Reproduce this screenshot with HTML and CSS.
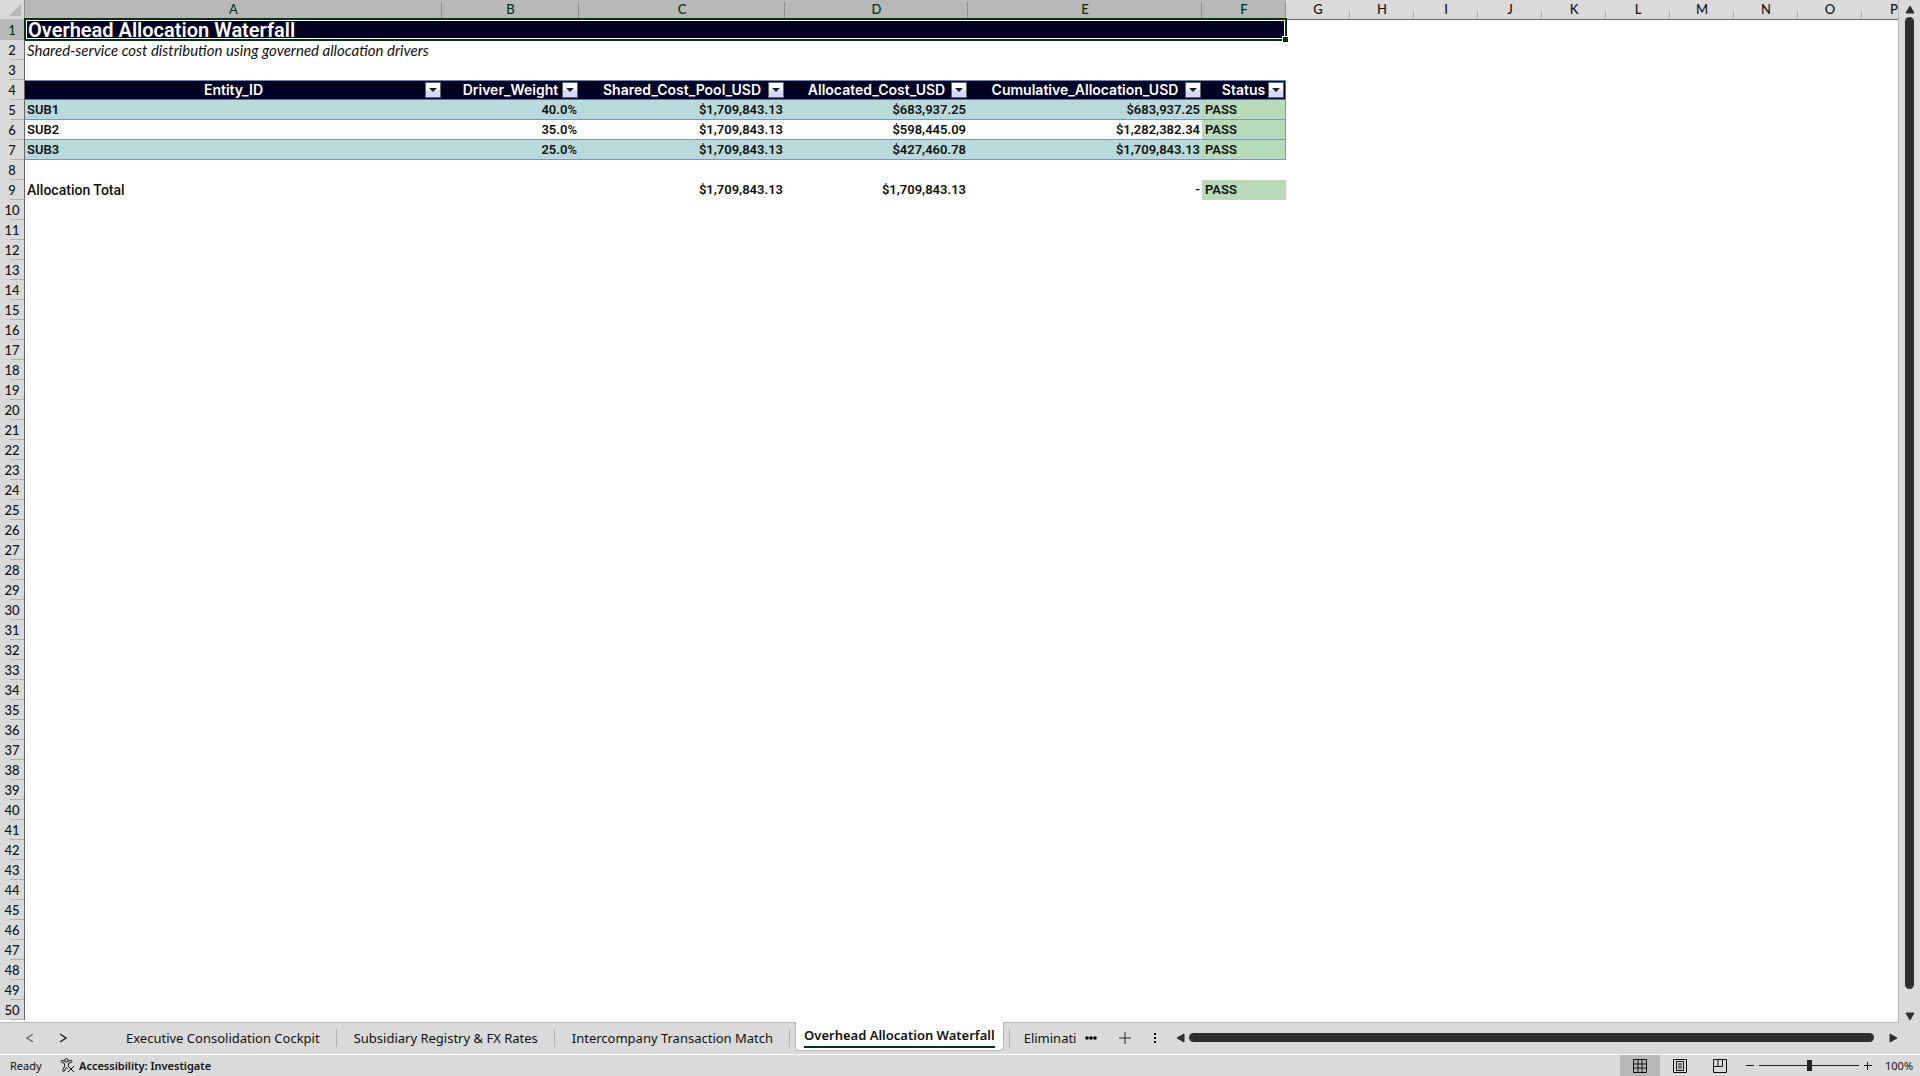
FILE: index.html
```
<!DOCTYPE html>
<html lang="en">
<head>
    <meta charset="UTF-8">
    <meta name="viewport" content="width=device-width, initial-scale=1.0">
    <title>Overhead Allocation Waterfall</title>
    <link rel="stylesheet" href="styles.css">
</head>
<body>
    <div class="workbook">
        <main class="main">
            <div class="sheet">
                <table class="grid">
                    <colgroup>
                        <col class="col-num"><col class="col-a"><col class="col-b"><col class="col-c"><col class="col-d"><col class="col-e"><col class="col-f">
                        <col class="col-std" span="10">
                    </colgroup>
                    <thead>
                        <tr>
                            <th class="corner"><svg width="12" height="12" viewBox="0 0 12 12"><path d="M12 0V12H0Z" fill="#b8b8b8"/></svg></th>
                            <th class="sel">A</th><th class="sel">B</th><th class="sel">C</th><th class="sel">D</th><th class="sel">E</th><th class="sel">F</th>
                            <th>G</th><th>H</th><th>I</th><th>J</th><th>K</th><th>L</th><th>M</th><th>N</th><th>O</th><th>P</th>
                        </tr>
                    </thead>
                    <tbody id="gridBody">
                        <tr>
                            <th class="sel">1</th>
                            <td class="title" colspan="6">Overhead Allocation Waterfall<span class="selection"></span></td>
                        </tr>
                        <tr>
                            <th>2</th>
                            <td class="subtitle" colspan="6">Shared-service cost distribution using governed allocation drivers</td>
                        </tr>
                        <tr><th>3</th></tr>
                        <tr class="head">
                            <th>4</th>
                            <td>Entity_ID<button class="filter" aria-label="Filter Entity_ID"></button></td>
                            <td>Driver_Weight<button class="filter" aria-label="Filter Driver_Weight"></button></td>
                            <td>Shared_Cost_Pool_USD<button class="filter" aria-label="Filter Shared_Cost_Pool_USD"></button></td>
                            <td>Allocated_Cost_USD<button class="filter" aria-label="Filter Allocated_Cost_USD"></button></td>
                            <td>Cumulative_Allocation_USD<button class="filter" aria-label="Filter Cumulative_Allocation_USD"></button></td>
                            <td>Status<button class="filter" aria-label="Filter Status"></button></td>
                        </tr>
                        <tr class="data band">
                            <th>5</th>
                            <td>SUB1</td><td class="num">40.0%</td><td class="num">$1,709,843.13</td><td class="num">$683,937.25</td><td class="num">$683,937.25</td><td class="pass">PASS</td>
                        </tr>
                        <tr class="data">
                            <th>6</th>
                            <td>SUB2</td><td class="num">35.0%</td><td class="num">$1,709,843.13</td><td class="num">$598,445.09</td><td class="num">$1,282,382.34</td><td class="pass">PASS</td>
                        </tr>
                        <tr class="data band">
                            <th>7</th>
                            <td>SUB3</td><td class="num">25.0%</td><td class="num">$1,709,843.13</td><td class="num">$427,460.78</td><td class="num">$1,709,843.13</td><td class="pass">PASS</td>
                        </tr>
                        <tr><th>8</th></tr>
                        <tr class="total">
                            <th>9</th>
                            <td class="total-label">Allocation Total</td><td></td><td class="num">$1,709,843.13</td><td class="num">$1,709,843.13</td><td class="num">-</td><td class="pass">PASS</td>
                        </tr>
                    </tbody>
                </table>
            </div>
            <div class="vscroll">
                <svg width="10" height="9" viewBox="0 0 10 9"><path d="M5 1L9 8H1Z"/></svg>
                <div class="thumb"></div>
                <svg width="10" height="9" viewBox="0 0 10 9"><path d="M1 1H9L5 8Z"/></svg>
            </div>
        </main>

        <nav class="tabbar">
            <div class="tab-nav">
                <button aria-label="Previous sheet"><svg width="10" height="12" viewBox="0 0 10 12"><path d="M8 2L2 6L8 10" stroke="#666"/></svg></button>
                <button aria-label="Next sheet"><svg width="10" height="12" viewBox="0 0 10 12"><path d="M2 2L8 6L2 10" stroke="#222"/></svg></button>
            </div>
            <button class="tab">Executive Consolidation Cockpit</button>
            <button class="tab">Subsidiary Registry &amp; FX Rates</button>
            <button class="tab">Intercompany Transaction Match</button>
            <button class="tab active"><span>Overhead Allocation Waterfall</span></button>
            <button class="tab cut">Eliminati</button>
            <div class="tab-tools">
                <button aria-label="More sheets"><svg width="12" height="4" viewBox="0 0 12 4"><circle cx="2" cy="2" r="1.8"/><circle cx="6" cy="2" r="1.8"/><circle cx="10" cy="2" r="1.8"/></svg></button>
                <button aria-label="New sheet"><svg width="12" height="12" viewBox="0 0 12 12"><path d="M6 0V12M0 6H12" stroke="#222"/></svg></button>
                <button aria-label="Resize tabs"><svg width="4" height="12" viewBox="0 0 4 12"><path d="M1 1H3V3H1ZM1 5H3V7H1ZM1 9H3V11H1Z"/></svg></button>
            </div>
            <div class="hscroll">
                <svg width="8" height="10" viewBox="0 0 8 10"><path d="M0 5L7 1V9Z"/></svg>
                <div class="thumb"></div>
                <svg width="8" height="10" viewBox="0 0 8 10"><path d="M1 1L8 5L1 9Z"/></svg>
            </div>
        </nav>

        <footer class="statusbar">
            <span class="ready">Ready</span>
            <button class="access">
                <svg width="15" height="15" viewBox="0 0 15 15"><circle cx="6.5" cy="2.4" r="1.7"/><path d="M4.8 3.2L1.6 2.4Q.4 3.4 1.6 4.2L4.6 5.6V8.2L2.6 12.4Q3 14 4.2 13.2L6.4 9.4L7.6 10.6M8.2 3.2L11.4 2.4Q12.8 3.2 11.6 4.2L8.4 5.6V7.8M8 8L14 14M14 8L8 14"/></svg>
                Accessibility: Investigate
            </button>
            <div class="views">
                <button class="on" aria-label="Normal view"><svg width="14" height="14" viewBox="0 0 14 14"><path d="M.5 .5H13.5V13.5H.5ZM5 .5V13.5M9 .5V13.5M.5 5H13.5M.5 9H13.5"/></svg></button>
                <button aria-label="Page layout view"><svg width="14" height="14" viewBox="0 0 14 14"><path d="M.5 .5H13.5V13.5H.5ZM3.5 2.5H10.5V11.5H3.5ZM5 5H9M5 7H9M5 9H9"/></svg></button>
                <button aria-label="Page break view"><svg width="14" height="14" viewBox="0 0 14 14"><path d="M.5 .5H13.5V13.5H.5ZM5 .5V7.5M9.5 .5V7.5H.5"/></svg></button>
            </div>
            <div class="zoom">
                <button aria-label="Zoom out"><svg width="8" height="8" viewBox="0 0 8 8"><path d="M0 3.5H8"/></svg></button>
                <input type="range" min="0" max="100" value="50" aria-label="Zoom">
                <button aria-label="Zoom in"><svg width="8" height="8" viewBox="0 0 8 8"><path d="M0 3.5H8M3.5 0V8"/></svg></button>
                <span class="percent">100%</span>
            </div>
        </footer>
    </div>

    <script>
        // fill the sheet with the empty rows below the totals
        const gridBody = document.getElementById('gridBody');
        for (let i = 10; i <= 50; i++) {
            const row = gridBody.insertRow();
            const th = document.createElement('th');
            th.textContent = i;
            row.appendChild(th);
        }
    </script>
</body>
</html>
```
FILE: styles.css
```
* {
    box-sizing: border-box;
}

body {
    margin: 0;
    font-family: "Noto Sans", "Open Sans", sans-serif;
    color: #111;
    background-color: #dadada;
}

button {
    border: none;
    padding: 0;
    margin: 0;
    background: none;
    font: inherit;
    color: inherit;
}

svg {
    display: block;
    flex: none;
}

.workbook {
    display: flex;
    flex-direction: column;
    height: 100vh;
    overflow: hidden;
}

.main {
    flex: 1;
    display: flex;
    min-height: 0;
}

.sheet {
    flex: 1;
    min-width: 0;
    overflow: hidden;
    background-color: #fff;
    border-right: 1px solid #b8b8b8;
    border-bottom: 1px solid #b8b8b8;
}

/* --- Grid --- */
.grid {
    table-layout: fixed;
    width: 100%;
    border-collapse: separate;
    border-spacing: 0;
}

.col-num { width: 25px; }
.col-a { width: 417px; }
.col-b { width: 137px; }
.col-c { width: 206px; }
.col-d { width: 183px; }
.col-e { width: 234px; }
.col-f { width: 84px; }
.col-std { width: 64px; }

.grid tr {
    height: 20px;
}

.grid th,
.grid td {
    padding: 0 2px;
    height: 20px;
    line-height: 18px;
    white-space: nowrap;
    position: relative;
}

.grid th {
    font-family: Lato, "Open Sans", sans-serif;
    font-weight: 500;
    font-size: 13px;
    line-height: 19px;
    background: linear-gradient(#b0b0b0, #b0b0b0) right bottom / 1px 8px no-repeat #dadada;
}

.grid thead th {
    border-bottom: 1px solid #666;
}

.grid thead th.sel {
    background: linear-gradient(#909090, #909090) right bottom / 1px 17px no-repeat #b8b8b8;
    color: #00330f;
}

.grid thead .corner {
    border-bottom-color: #b8b8b8;
    border-right: 1px solid #909090;
    background: #dadada;
    padding: 0 3px 0 9px;
}

.grid tbody th {
    padding-top: 1px;
    border-right: 1px solid #666;
    background: linear-gradient(#b0b0b0, #b0b0b0) right bottom / 14px 1px no-repeat #dadada;
}

.grid tbody th.sel {
    background-color: #b8b8b8;
    color: #00330f;
}

.grid .title {
    font-family: Roboto, sans-serif;
    font-size: 20px;
    font-weight: 600;
    color: #fff;
    background-color: #000022;
    padding: 0 3px;
}

.selection {
    position: absolute;
    inset: -2px -1px -1px -1px;
    border: 2px solid #00330f;
    box-shadow: inset 0 0 0 1px #fff;
}

.selection::after {
    content: "";
    position: absolute;
    right: -3px;
    bottom: -3px;
    width: 5px;
    height: 5px;
    background-color: #00330f;
    outline: 1px solid #fff;
}

.grid .subtitle {
    font-family: Lato, sans-serif;
    font-size: 15px;
    font-style: italic;
}

.head td {
    font-family: Inter, sans-serif;
    font-size: 14px;
    font-weight: 600;
    text-align: center;
    color: #fff;
    background-color: #000022;
    border-top: 1px solid #5b8bc4;
    border-bottom: 1px solid #5b6fa8;
}

.head td:last-child {
    border-right: 1px solid #5b6fa8;
}

.filter {
    position: absolute;
    right: 1px;
    top: 1px;
    width: 16px;
    height: 16px;
    border: 1px solid #666;
    background: linear-gradient(#fff 50%, #d8d8fa 50%);
}

.filter::after {
    content: "";
    position: absolute;
    left: 3px;
    top: 5px;
    border: 4px solid transparent;
    border-top-color: #222;
    border-bottom: none;
}

.data td,
.total td {
    font-family: Roboto, sans-serif;
    font-size: 13px;
    font-weight: 600;
}

.data td {
    border-bottom: 1px solid #7898bc;
    line-height: 17px;
}

.band td {
    background-color: #b8dada;
}

.grid .num {
    text-align: right;
}

.grid .pass {
    background-color: #b8dab8;
    padding-left: 3px;
}

.data .pass {
    border-right: 1px solid #7898bc;
}

.total .total-label {
    font-size: 14px;
    font-weight: 500;
}

/* --- Scrollbars --- */
.vscroll {
    width: 21px;
    display: flex;
    flex-direction: column;
    align-items: center;
    padding: 5px 0 2px;
}

.thumb {
    border-radius: 5px;
    background-color: #2e2e2e;
}

.vscroll svg,
.hscroll svg {
    fill: #2e2e2e;
    stroke: #2e2e2e;
    stroke-linejoin: round;
}

.vscroll .thumb {
    width: 9px;
    flex: 1;
    margin: 3px 0 23px;
}

.hscroll {
    flex: 1;
    display: flex;
    align-items: center;
    padding: 0 23px 0 0;
}

.hscroll .thumb {
    height: 9px;
    flex: 1;
    margin: 0 15px 0 4px;
}

/* --- Sheet tabs --- */
.tabbar {
    display: flex;
    height: 31px;
    padding-bottom: 2px;
}

.tab-nav {
    display: flex;
    align-items: center;
    gap: 23px;
    width: 109px;
    padding-left: 25px;
}

.tab-nav path {
    fill: none;
    stroke-width: 1.5;
}

.tab {
    position: relative;
    padding: 0 17px;
    font-size: 13px;
    white-space: nowrap;
}

.tab::after {
    content: "";
    position: absolute;
    right: 0;
    top: 6px;
    width: 1px;
    height: 18px;
    background-color: #b0b0b0;
}

.tab.active {
    align-self: flex-start;
    height: 29px;
    margin: -1px 5px 0;
    padding: 0 8px;
    background-color: #fff;
    border: 1px solid #b8b8b8;
    border-top: none;
    border-radius: 0 0 4px 4px;
    font-weight: 600;
}

.tab.active span {
    display: block;
    line-height: 22px;
    border-bottom: 2px solid #00330f;
}

.tab.active::after,
.tab.cut::after {
    display: none;
}

.tab.cut {
    padding: 0 9px 0 14px;
    border-left: 1px solid #b0b0b0;
    height: 18px;
    margin-top: 6px;
}

.tab-tools {
    display: flex;
    align-items: center;
    gap: 22px;
    padding-right: 20px;
}

/* --- Status bar --- */
.statusbar {
    display: flex;
    align-items: center;
    height: 22px;
    border-top: 1px solid #fff;
    font-size: 11px;
    line-height: 20px;
}

.ready {
    padding-left: 10px;
    width: 60px;
}

.access {
    display: flex;
    align-items: center;
    gap: 4px;
    font-weight: 600;
}

.access svg,
.views svg,
.zoom svg {
    fill: none;
    stroke: #111;
}

.views {
    display: flex;
    align-self: stretch;
    margin-left: auto;
}

.views button {
    display: flex;
    justify-content: center;
    align-items: center;
    width: 40px;
}

.views .on {
    background-color: #b8b8b8;
}

.zoom {
    display: flex;
    align-items: center;
    width: 180px;
    padding-left: 6px;
}

.zoom input {
    appearance: none;
    width: 100px;
    height: 12px;
    margin: 0 5px;
    background: linear-gradient(#222, #222) center / 100% 1px no-repeat;
}

.zoom input::-webkit-slider-thumb {
    appearance: none;
    width: 5px;
    height: 11px;
    background-color: #222;
}

.percent {
    margin-left: 13px;
}
```
